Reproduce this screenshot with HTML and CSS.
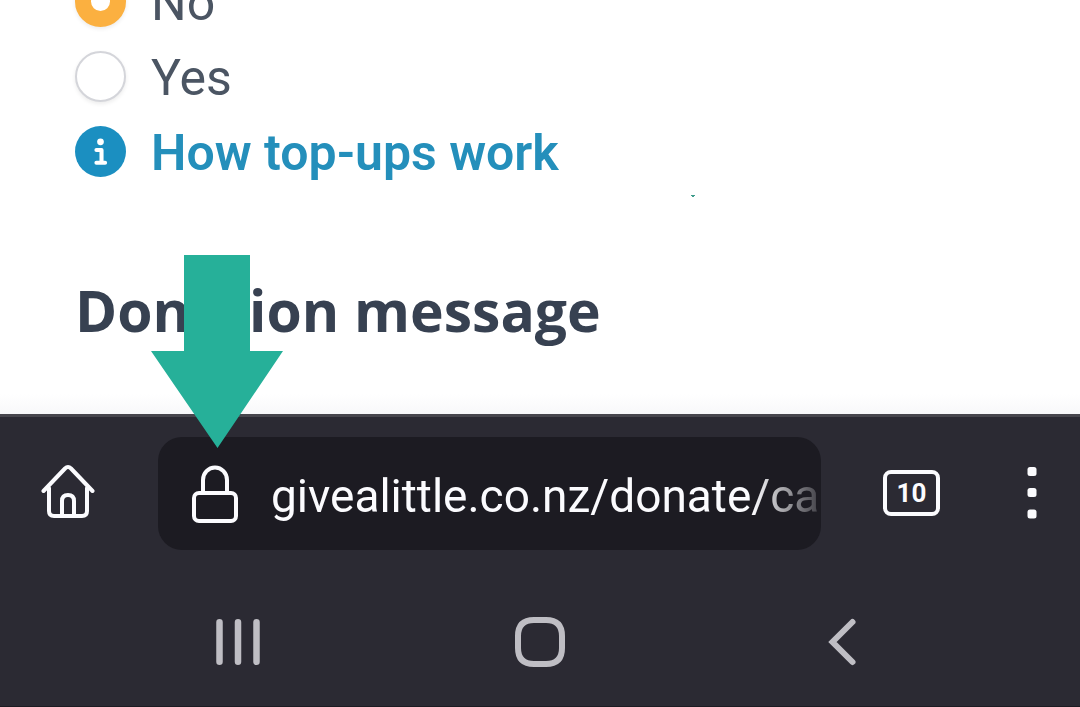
FILE: index.html
```html
<!DOCTYPE html>
<html lang="en">
<head>
<meta charset="utf-8">
<meta name="viewport" content="width=device-width, initial-scale=1">
<title>Donate</title>
<link rel="stylesheet" href="styles.css">
</head>
<body class="screen">
  <main class="page">
    <form class="options">
      <label class="option"><input class="radio" type="radio" name="topup" checked><span class="caption">No</span></label>
      <label class="option"><input class="radio" type="radio" name="topup"><span class="caption">Yes</span></label>
      <a class="option help" href="#topups">
        <svg class="info" viewBox="0 0 50 50" aria-hidden="true">
          <circle cx="25" cy="25" r="25" fill="#1b8fc1"/>
          <circle cx="25" cy="15.500" r="3.300" fill="#fff"/>
          <path d="M21 23.500h5V36M21 36h8.500" fill="none" stroke="#fff" stroke-width="4" stroke-linecap="round" stroke-linejoin="round"/>
        </svg>
        <span class="caption">How top-ups work</span>
      </a>
    </form>
    <h2 class="heading">Donation message</h2>
    <svg class="speck" viewBox="0 0 4 2" aria-hidden="true"><path d="M0 0h4v1H3v1H1V1H0z" fill="#3f9c8c"/></svg>
    <svg class="arrow" viewBox="0 0 132 193" aria-hidden="true"><path d="M33 0h66v96h33L66.500 193 0 96h33z" fill="#26b099"/></svg>
  </main>
  <footer class="browser">
    <div class="toolbar">
      <button class="tool" type="button" aria-label="Home">
        <svg class="glyph" viewBox="0 0 56 56" fill="none" stroke="#fbfbfe" stroke-width="4" stroke-linecap="round" stroke-linejoin="round" aria-hidden="true">
          <path d="M3.500 26 25 3.500q3-3 6 0L52.500 26M9 23v23q0 5 5 5h28q5 0 5-5V23M22 50V36q0-6 6-6t6 6v14"/>
        </svg>
      </button>
      <div class="address">
        <svg class="lock" viewBox="0 0 46 58" fill="none" stroke="#fbfbfe" stroke-width="4" aria-hidden="true">
          <rect x="2" y="28" width="42" height="28" rx="5"/>
          <path d="M11 28V15a12 12.500 0 0 1 24 0v13"/>
        </svg>
        <input class="url" type="text" aria-label="Address" value="givealittle.co.nz/donate/ca" readonly>
      </div>
      <button class="tool tabs" type="button" aria-label="Open tabs"><span class="count">10</span></button>
      <button class="tool menu" type="button" aria-label="Menu">
        <svg class="dots" viewBox="0 0 10 52" fill="#fbfbfe" aria-hidden="true">
          <rect x="0.500" width="9" height="9" rx="2.500"/><rect x="0.500" y="21" width="9" height="9" rx="2.500"/><rect x="0.500" y="42.500" width="9" height="9" rx="2.500"/>
        </svg>
      </button>
    </div>
    <nav class="system" aria-label="System">
      <button class="key" type="button" aria-label="Recent apps">
        <svg class="keyicon" viewBox="0 0 50 50" stroke="#bfbec4" stroke-width="6.500" stroke-linecap="round" aria-hidden="true"><path d="M6.500 5.300v39.500M25 5.300v39.500M43.500 5.300v39.500"/></svg>
      </button>
      <button class="key" type="button" aria-label="Home screen">
        <svg class="keyicon" viewBox="0 0 50 50" fill="none" stroke="#bfbec4" stroke-width="6" aria-hidden="true"><path d="M19 3h12Q47 3 47 19v12Q47 47 31 47H19Q3 47 3 31V19Q3 3 19 3z"/></svg>
      </button>
      <button class="key" type="button" aria-label="Back">
        <svg class="keyicon" viewBox="0 0 50 50" fill="none" stroke="#bfbec4" stroke-width="6" stroke-linecap="round" aria-hidden="true"><path d="M35.500 5 15.500 25l20 20"/></svg>
      </button>
    </nav>
  </footer>
</body>
</html>
```
FILE: styles.css
```css
* {
  box-sizing: border-box;
}

.screen {
  display: flex;
  flex-direction: column;
  min-height: 100vh;
  margin: 0;
  overflow: hidden;
  background: #fff;
  font-family: Roboto, sans-serif;
}

.page {
  position: relative;
  flex: 1;
  padding: 0 75px;
  background: linear-gradient(to top, #f8f8fa, #fff 20px);
}

.options {
  display: flex;
  flex-direction: column;
  align-items: flex-start;
  margin-top: -36px;
}

.option {
  display: flex;
  align-items: center;
  gap: 25px;
  height: 75px;
  color: #4b5563;
  font-size: 50px;
  line-height: 72px;
}

.caption {
  padding-top: 2px;
}

.radio {
  appearance: none;
  width: 51px;
  height: 51px;
  margin: 0;
  border: 2px solid #d4d5da;
  border-radius: 50%;
  background: #fff;
  box-shadow: 0 2px 4px rgb(0 0 0 / 8%);
}

.radio:checked {
  border: 16px solid #fbb040;
}

.help {
  color: #248fbb;
  font-weight: 600;
  text-decoration: none;
}

.info {
  width: 51px;
  height: 51px;
}

.heading {
  margin: 83px 0 0;
  color: #374151;
  font-family: "Open Sans", sans-serif;
  font-size: 57px;
  font-weight: 700;
  line-height: 76px;
}

.speck {
  position: absolute;
  top: 195px;
  left: 691px;
  width: 4px;
  height: 2px;
}

.arrow {
  position: absolute;
  z-index: 1;
  top: 255px;
  left: 151px;
  width: 132px;
  height: 193px;
}

.browser {
  border-top: 3px solid #47464d;
  border-bottom: 1px solid #1c1b22;
  background: #2b2a33;
}

.toolbar {
  display: flex;
  align-items: center;
  padding: 20px 32px 20px 40px;
}

.tool {
  display: flex;
  justify-content: center;
  padding: 0 0 2px;
  border: 0;
  background: none;
  color: #fbfbfe;
}

.glyph {
  width: 56px;
  height: 56px;
}

.address {
  display: flex;
  flex: 1;
  align-items: center;
  gap: 33px;
  min-width: 0;
  height: 113px;
  margin: 0 62px;
  padding: 0 4px 0 34px;
  border-radius: 24px;
  background: #1c1b22;
}

.lock {
  flex: none;
  width: 46px;
  height: 58px;
}

.url {
  flex: 1;
  min-width: 0;
  height: 72px;
  padding: 5px 0 0;
  border: 0;
  outline: 0;
  background: none;
  color: #fbfbfe;
  font: 46px/66px Roboto, sans-serif;
  mask-image: linear-gradient(to left, rgb(0 0 0 / 20%), #000 64px);
}

.count {
  width: 57px;
  height: 46px;
  border: 4px solid;
  border-radius: 8px;
  font: 700 26px/38px Roboto, sans-serif;
}

.menu {
  width: 32px;
  margin-left: 76px;
}

.dots {
  width: 10px;
  height: 52px;
}

.system {
  display: grid;
  grid-template-columns: repeat(3, 302px);
  justify-content: center;
  padding: 47px 0 39px;
}

.key {
  display: flex;
  justify-content: center;
  padding: 0;
  border: 0;
  background: none;
}

.keyicon {
  width: 50px;
  height: 50px;
}
```
